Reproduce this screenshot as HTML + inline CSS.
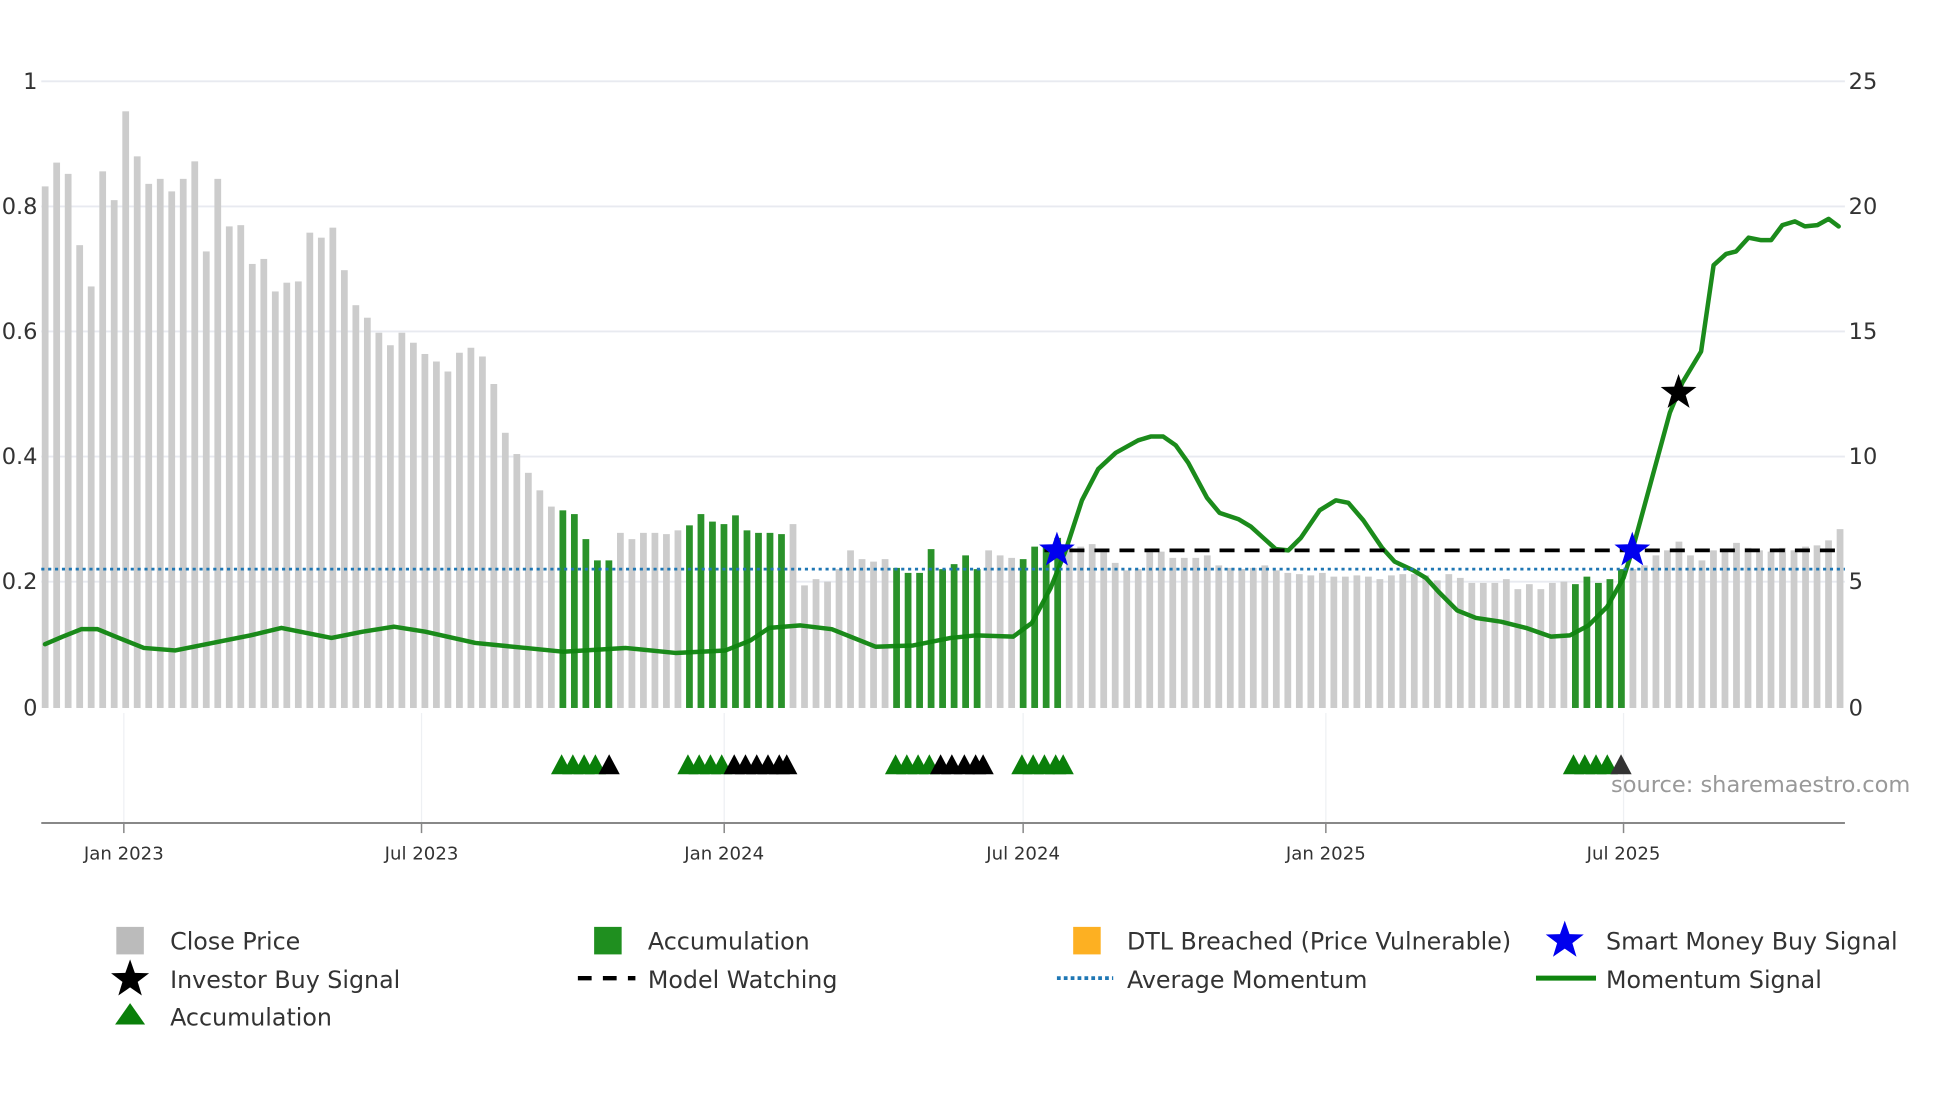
<!DOCTYPE html>
<html><head><meta charset="utf-8"><style>
html,body{margin:0;padding:0;background:#fff;width:1960px;height:1102px;overflow:hidden}
svg{display:block}
text{font-family:"DejaVu Sans","Liberation Sans",sans-serif}
</style></head><body>
<svg id="s" width="1960" height="1102" viewBox="0 0 1567 881" preserveAspectRatio="none" xmlns="http://www.w3.org/2000/svg">
<g stroke="#e8eaf0" stroke-width="1.5">
<line x1="33" y1="65" x2="1475" y2="65"/><line x1="33" y1="165" x2="1475" y2="165"/>
<line x1="33" y1="265" x2="1475" y2="265"/><line x1="33" y1="365" x2="1475" y2="365"/>
<line x1="33" y1="465" x2="1475" y2="465"/>
</g>
<g stroke="#eef0f3" stroke-width="1">
<line x1="99" y1="570" x2="99" y2="658"/><line x1="337" y1="570" x2="337" y2="658"/>
<line x1="579" y1="570" x2="579" y2="658"/><line x1="818" y1="570" x2="818" y2="658"/>
<line x1="1060" y1="570" x2="1060" y2="658"/><line x1="1298" y1="570" x2="1298" y2="658"/>
</g>
<g id="bars"></g>
<polyline id="mom" fill="none" stroke="#0f850f" stroke-width="3.6" stroke-linejoin="round" stroke-linecap="round" opacity="0.95"/>
<line x1="33" y1="455" x2="1475" y2="455" stroke="#1f77b4" stroke-width="2.2" stroke-dasharray="2.5 3"/>
<line x1="835" y1="440" x2="1470" y2="440" stroke="#000" stroke-width="3" stroke-dasharray="12 8"/>
<g id="stars"></g>
<g id="tris"></g>
<line x1="33" y1="658" x2="1475" y2="658" stroke="#888" stroke-width="1.6"/>
<g stroke="#888" stroke-width="1.2">
<line x1="99" y1="658" x2="99" y2="666"/><line x1="337" y1="658" x2="337" y2="666"/>
<line x1="579" y1="658" x2="579" y2="666"/><line x1="818" y1="658" x2="818" y2="666"/>
<line x1="1060" y1="658" x2="1060" y2="666"/><line x1="1298" y1="658" x2="1298" y2="666"/>
</g>
<g font-size="14.5" fill="#333" text-anchor="middle">
<text x="99" y="687">Jan 2023</text><text x="337" y="687">Jul 2023</text>
<text x="579" y="687">Jan 2024</text><text x="818" y="687">Jul 2024</text>
<text x="1060" y="687">Jan 2025</text><text x="1298" y="687">Jul 2025</text>
</g>
<g font-size="18" fill="#333" text-anchor="end">
<text x="30" y="71">1</text><text x="30" y="171">0.8</text><text x="30" y="271">0.6</text>
<text x="30" y="371">0.4</text><text x="30" y="471">0.2</text><text x="30" y="572">0</text>
</g>
<g font-size="18" fill="#333">
<text x="1478" y="71">25</text><text x="1478" y="171">20</text><text x="1478" y="271">15</text>
<text x="1478" y="371">10</text><text x="1478" y="471">5</text><text x="1478" y="572">0</text>
</g>
<text x="1288" y="633" font-size="18" fill="#999">source: sharemaestro.com</text>
<g font-size="19" fill="#333">
<rect x="93" y="741" width="22" height="22" fill="#bbb"/><text x="136" y="759">Close Price</text>
<rect x="475" y="741" width="22" height="22" fill="#1f8f1f"/><text x="518" y="759">Accumulation</text>
<rect x="858" y="741" width="22" height="22" fill="#fdb022"/><text x="901" y="759">DTL Breached (Price Vulnerable)</text>
<text x="1284" y="759">Smart Money Buy Signal</text>
<text x="136" y="790">Investor Buy Signal</text>
<line x1="462" y1="782" x2="508" y2="782" stroke="#000" stroke-width="3.5" stroke-dasharray="11 9"/><text x="518" y="790">Model Watching</text>
<line x1="845" y1="782" x2="890" y2="782" stroke="#1f77b4" stroke-width="3" stroke-dasharray="3 2.5"/><text x="901" y="790">Average Momentum</text>
<line x1="1228" y1="782" x2="1276" y2="782" stroke="#0f850f" stroke-width="4"/><text x="1284" y="790">Momentum Signal</text>
<polygon points="104,802 116,819 92,819" fill="#0a7f0a"/><text x="136" y="820">Accumulation</text>
</g>
<g id="lstars"></g>
</svg>
<script>
var tops=[149,130,139,196,229,137,160,89,125,147,143,153,143,129,201,143,181,180,211,207,233,226,225,186,190,182,216,244,254,266,276,266,274,283,289,297,282,278,285,307,346,363,378,392,405,
408,411,431,448,448,426,431,426,426,427,424,420,411,417,419,412,424,426,426,427,419,468,463,465,455,440,447,449,447,
454,458,458,439,455,451,444,455,440,444,446,447,437,437,430,437,437,435,440,450,456,455,441,441,446,446,446,444,452,454,455,454,452,456,458,459,460,458,461,461,460,461,463,460,459,459,460,464,459,462,466,466,466,463,471,467,471,466,465,467,
461,466,463,455,455,452,444,440,433,444,448,440,439,434,438,440,441,438,440,437,436,432,423];
var green={};[45,46,47,48,49].forEach(function(i){green[i]=1});
for(var i=56;i<=64;i++)green[i]=1;for(i=74;i<=81;i++)green[i]=1;for(i=85;i<=88;i++)green[i]=1;
var n=tops.length, x0=36, x1=1471, p=(x1-x0)/(n-1);
var bars=document.getElementById('bars'),h='';
var gi=Math.round((1258-x0)/p);for(i=gi;i<gi+5;i++)green[i]=1;
for(i=0;i<n;i++){var x=x0+i*p-2.6;h+='<rect x="'+x.toFixed(1)+'" y="'+tops[i]+'" width="5.4" height="'+(566-tops[i])+'" fill="'+(green[i]?'#2a922a':'#cccccc')+'"/>';}
bars.innerHTML=h;
var pts=[[36,515],[50,509],[65,503],[78,503],[95,510],[115,518],[140,520],[160,516],[200,508],[225,502],[245,506],[265,510],[290,505],[315,501],[340,505],[380,514],[420,518],[450,521],[500,518],[540,522],[580,520],[600,512],[615,502],[640,500],[665,503],[700,517],[730,516],[760,510],[780,508],[810,509],[825,498],[840,470],[852,440],[865,400],[878,375],[892,362],[910,352],[920,349],[930,349],[940,356],[950,370],[965,398],[975,410],[990,415],[1000,421],[1010,430],[1020,439],[1030,440],[1040,430],[1055,408],[1068,400],[1078,402],[1090,416],[1105,438],[1115,449],[1130,456],[1140,462],[1150,473],[1165,488],[1180,494],[1200,497],[1220,502],[1240,509],[1255,508],[1270,500],[1285,485],[1298,462],[1305,440],[1320,385],[1335,330],[1345,306],[1360,281],[1370,212],[1380,203],[1388,201],[1398,190],[1408,192],[1416,192],[1425,180],[1435,177],[1443,181],[1453,180],[1462,175],[1470,181]];
document.getElementById('mom').setAttribute('points',pts.map(function(a){return a.join(',')}).join(' '));
function star(cx,cy,R,col){var r=R*0.4,s='';for(var k=0;k<10;k++){var a=-Math.PI/2+k*Math.PI/5,rr=k%2?r:R;s+=(cx+rr*Math.cos(a)).toFixed(1)+','+(cy+rr*Math.sin(a)).toFixed(1)+' ';}return '<polygon points="'+s+'" fill="'+col+'"/>';}
document.getElementById('stars').innerHTML=star(845,440,15,'#0000ee')+star(1305,440,15,'#0000ee')+star(1342,314,15,'#000');
document.getElementById('lstars').innerHTML=star(1251,752,16,'#0000ee')+star(104,783,16,'#000');
var t='';function tri(x,c){t+='<polygon points="'+x+',603 '+(x+8.5)+',619 '+(x-8.5)+',619" fill="'+c+'"/>';}
[449,458,467,476].forEach(function(x){tri(x,'#0a7f0a')});tri(487,'#000');
[550,559,568,577].forEach(function(x){tri(x,'#0a7f0a')});[587,596,605,614,623,629].forEach(function(x){tri(x,'#000')});
[716,725,734,743].forEach(function(x){tri(x,'#0a7f0a')});[752,761,771,780,786].forEach(function(x){tri(x,'#000')});
[817,826,835,844,850].forEach(function(x){tri(x,'#0a7f0a')});
[1258,1267,1276,1285].forEach(function(x){tri(x,'#0a7f0a')});tri(1296,'#333');
document.getElementById('tris').innerHTML=t;
</script>
</body></html>
